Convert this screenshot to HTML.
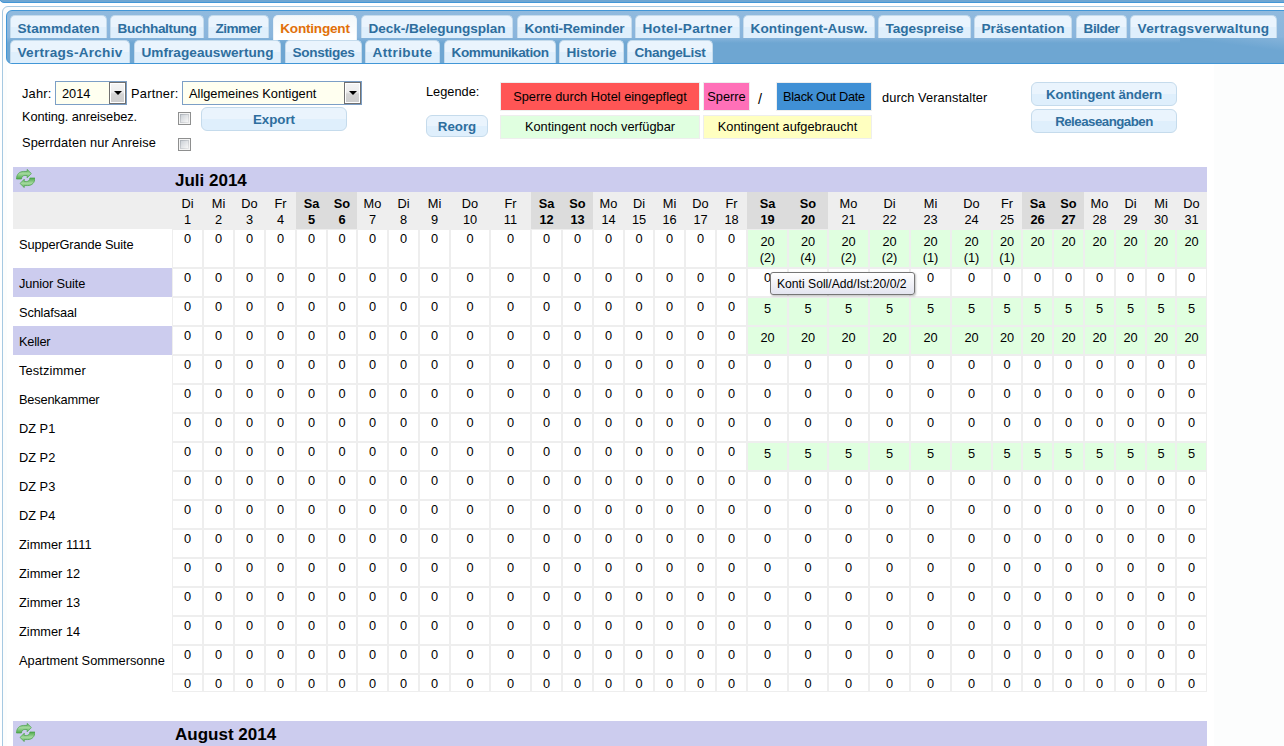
<!DOCTYPE html>
<html lang="de"><head><meta charset="utf-8"><title>Kontingent</title>
<style>
html,body{margin:0;padding:0;background:#fff;overflow:hidden}
body{width:1284px;height:746px;position:relative;font-family:"Liberation Sans",sans-serif;font-size:12.8px;color:#000}
.topstrip{position:absolute;left:-1px;top:-3px;width:1400px;height:5.5px;background:#6ea6d2;border:1px solid #4297d7;border-radius:0 0 0 5px;box-sizing:border-box}
.panel{position:absolute;left:2px;top:6px;width:1400px;height:900px;border:1px solid #a6c9e2;border-radius:6px;background:#fcfdfd;box-sizing:border-box}
.abs>*{position:absolute}
.white{left:7px;top:64px;width:1207px;height:700px;background:#fff}
.tabhead{left:6px;top:10px;width:1400px;height:54px;border:1px solid #4297d7;border-radius:6px 0 0 6px;box-sizing:border-box;background:linear-gradient(#90bade 0,#8ab5dc 26px,#6ea6d2 32px,#6ea6d2 100%)}
.tab{position:absolute;height:22px;line-height:24px;border:1px solid #c5dbec;border-bottom:0;border-radius:5px 5px 0 0;background:linear-gradient(#eaf4fd 0,#eaf4fd 10.5px,#dfeffc 11.5px,#dfeffc 100%);color:#2e6e9e;font-weight:bold;font-size:13.6px;text-align:center;white-space:nowrap;box-sizing:content-box}
.tab.act{background:linear-gradient(#f4f8fa 0,#fafcfd 12px,#fff 20px);color:#e17009;border-color:#eaf2f8;height:24px}
.lbl{white-space:nowrap;line-height:15px}
.sel{height:22px;border:1px solid #7c9fc6;background:#fffff0;box-sizing:content-box}
.sel span{position:absolute;left:6px;top:0;line-height:23px;white-space:nowrap}
.sel i{position:absolute;right:0;top:0;width:17px;height:22px;border:1px solid #707070;box-sizing:border-box;background:linear-gradient(#f4f4f4 0,#ededed 45%,#d4d4d4 55%,#cdcdcd 100%);box-shadow:inset 0 0 0 1px #fff}
.sel i b{position:absolute;left:4px;top:8px;width:0;height:0;border:4px solid transparent;border-top:4px solid #000;border-bottom:0}
.cb{width:11px;height:11px;border:1px solid #8e8f8f;background:linear-gradient(135deg,#cdd2d8,#f7f7f7) 2px 2px/7px 7px no-repeat,linear-gradient(135deg,#aab0b7,#e9e9ea) 1px 1px/9px 9px no-repeat,#f4f4f4}
.btn{height:22px;line-height:23px;border:1px solid #c5dbec;border-radius:6px;background:linear-gradient(#eaf4fd 0,#eaf4fd 50%,#dfeffc 50%,#dfeffc 100%);color:#2e6e9e;font-weight:bold;font-size:13.3px;text-align:center;white-space:nowrap}
.leg{border:1px solid #eee;text-align:center;white-space:nowrap}
.mhead{left:13px;width:1194px;height:25px;background:#ccccee}
.mhead span{position:absolute;left:162px;top:1px;line-height:26px;font-size:17px;font-weight:bold}
.mhead .ico{position:absolute;left:2.5px;top:2px}
.grid{left:13px;border-collapse:separate;border-spacing:0;table-layout:fixed;width:1194px}
.grid th,.grid td{box-sizing:border-box;padding:0;text-align:center;vertical-align:top;font-weight:normal;overflow:hidden}
.grid th{background:#eee;height:37px;line-height:16px;padding-top:4px}
.grid th.we{background:#dcdcdc;font-weight:bold}
.grid td{border:1px solid #eee;height:29px;line-height:16px;padding-top:1px;background:#fff}
.grid td.g{background:#e0ffe0;padding-top:3px}
.grid tr.r1 td.g{padding-top:4px}
.grid td.l{border-color:transparent;text-align:left;padding:7px 0 0 5px;white-space:nowrap;background:transparent}
.grid td.l.lav{background:#ccccee}
.grid tr.r1 td{height:39px}
.grid tr.rl td{height:18px;line-height:15px}
.grid tr.rl td.l{padding-top:0}
.tip{left:770px;top:272px;height:21px;line-height:21px;padding:0 7px 0 6px;border:1px solid #767676;border-radius:3px;background:linear-gradient(#fff,#e4e5f0);color:#000;font-size:12.15px;white-space:nowrap;width:130px;line-height:22px;box-shadow:1px 1px 2px rgba(0,0,0,.25)}

.tab.r1{line-height:26px}
.wedge{position:absolute;left:1173px;top:27px;width:110px;height:14px;background:linear-gradient(to bottom left,#86b3da 0,#7aadd6 25%,#6ea6d2 50%)}

</style></head><body>
<div class="topstrip"></div>
<div class="panel"></div><div class="abs">
<div class="white"></div>
<div class="tabhead"><div class="wedge"></div>
<a class="tab r1" style="letter-spacing:0.041px;left:3px;top:4px;width:95px">Stammdaten</a>
<a class="tab r1" style="letter-spacing:-0.371px;left:103px;top:4px;width:92px">Buchhaltung</a>
<a class="tab r1" style="letter-spacing:-0.518px;left:201px;top:4px;width:59px">Zimmer</a>
<a class="tab r1 act" style="letter-spacing:-0.223px;left:266px;top:4px;width:82px">Kontingent</a>
<a class="tab r1" style="letter-spacing:-0.065px;left:354px;top:4px;width:150px">Deck-/Belegungsplan</a>
<a class="tab r1" style="letter-spacing:-0.14px;left:510px;top:4px;width:113px">Konti-Reminder</a>
<a class="tab r1" style="letter-spacing:0.299px;left:628px;top:4px;width:103px">Hotel-Partner</a>
<a class="tab r1" style="letter-spacing:0.076px;left:736px;top:4px;width:130px">Kontingent-Ausw.</a>
<a class="tab r1" style="letter-spacing:-0.031px;left:871px;top:4px;width:91px">Tagespreise</a>
<a class="tab r1" style="letter-spacing:0.055px;left:967px;top:4px;width:96px">Präsentation</a>
<a class="tab r1" style="letter-spacing:-0.422px;left:1069px;top:4px;width:49px">Bilder</a>
<a class="tab r1" style="letter-spacing:0.324px;left:1123px;top:4px;width:145px">Vertragsverwaltung</a>
<a class="tab" style="letter-spacing:0.25px;left:3px;top:29px;width:118px">Vertrags-Archiv</a>
<a class="tab" style="letter-spacing:0.033px;left:127px;top:29px;width:145px">Umfrageauswertung</a>
<a class="tab" style="letter-spacing:-0.33px;left:278px;top:29px;width:75px">Sonstiges</a>
<a class="tab" style="letter-spacing:0.373px;left:358px;top:29px;width:73px">Attribute</a>
<a class="tab" style="letter-spacing:-0.44px;left:437px;top:29px;width:110px">Kommunikation</a>
<a class="tab" style="letter-spacing:-0.078px;left:552px;top:29px;width:63px">Historie</a>
<a class="tab" style="letter-spacing:-0.302px;left:620px;top:29px;width:84px">ChangeList</a>
</div>
<div class="lbl" style="left:22px;top:86px;letter-spacing:0.2px">Jahr:</div>
<div class="sel" style="left:55px;top:81px;width:70px"><span>2014</span><i><b></b></i></div>
<div class="lbl" style="left:131px;top:86px;letter-spacing:0.25px">Partner:</div>
<div class="sel" style="left:182px;top:81px;width:178px"><span>Allgemeines Kontigent</span><i><b></b></i></div>
<div class="lbl" style="left:22px;top:109px;letter-spacing:-0.084px">Konting. anreisebez.</div>
<div class="cb" style="left:178px;top:112px"></div>
<div class="btn" style="left:201px;top:107px;width:144px">Export</div>
<div class="lbl" style="left:22px;top:135px;letter-spacing:0.109px">Sperrdaten nur Anreise</div>
<div class="cb" style="left:178px;top:138px"></div>
<div class="lbl" style="left:426px;top:84px">Legende:</div>
<div class="btn" style="left:426px;top:115px;width:60px;height:20px;line-height:22px">Reorg</div>
<div class="leg" style="left:500px;top:82px;width:198px;height:27px;line-height:27px;background:#ff5555">Sperre durch Hotel eingepflegt</div>
<div class="leg" style="left:703px;top:82px;width:45px;height:27px;line-height:27px;background:#ff70b8">Sperre</div>
<div class="lbl" style="left:758px;top:91.5px;font-size:14.5px">/</div>
<div class="leg" style="left:776px;top:82px;width:94px;height:27px;line-height:27px;background:#4090d5;letter-spacing:-0.3px">Black Out Date</div>
<div class="lbl" style="left:882px;top:90px;letter-spacing:0.086px">durch Veranstalter</div>
<div class="leg" style="left:500px;top:115px;width:198px;height:22px;line-height:22px;background:#e0ffe0">Kontingent noch verfügbar</div>
<div class="leg" style="left:703px;top:115px;width:167px;height:22px;line-height:22px;background:#ffffc0">Kontingent aufgebraucht</div>
<div class="btn" style="left:1031px;top:82px;width:144px;letter-spacing:-0.129px">Kontingent ändern</div>
<div class="btn" style="left:1031px;top:109px;width:144px;letter-spacing:-0.518px">Releaseangaben</div>

<div class="mhead" style="top:167px"><svg class="ico" width="19.6" height="19" viewBox="0 0 20.4 18.8" preserveAspectRatio="none"><defs><linearGradient id="ga1" x1="0" y1="0" x2="0" y2="1"><stop offset="0" stop-color="#5fb35a"/><stop offset="0.45" stop-color="#a3d99e"/><stop offset="1" stop-color="#4fa84c"/></linearGradient></defs><g fill="url(#ga1)" stroke="#46a044" stroke-width="0.7" stroke-linejoin="round"><path d="M0.5 9.9 C0.6 5.4 3.2 2.5 8 2.4 L11.6 2.4 L11.6 0.4 L16 4.5 L11.6 8.7 L11.6 6.4 L9.2 6.4 C7.2 6.5 5.9 7.6 5.7 9.9 Z"/><path d="M0.5 9.9 C0.6 5.4 3.2 2.5 8 2.4 L11.6 2.4 L11.6 0.4 L16 4.5 L11.6 8.7 L11.6 6.4 L9.2 6.4 C7.2 6.5 5.9 7.6 5.7 9.9 Z" transform="rotate(180 10.1 9.4)"/></g></svg><span>Juli 2014</span></div>
<table class="grid" cellspacing="0" cellpadding="0" style="top:192px"><colgroup><col style="width:159px"><col style="width:31px"><col style="width:31px"><col style="width:31px"><col style="width:31px"><col style="width:31px"><col style="width:30px"><col style="width:31px"><col style="width:31px"><col style="width:31px"><col style="width:40px"><col style="width:41px"><col style="width:31px"><col style="width:31px"><col style="width:31px"><col style="width:30px"><col style="width:31px"><col style="width:31px"><col style="width:31px"><col style="width:41px"><col style="width:40px"><col style="width:41px"><col style="width:41px"><col style="width:41px"><col style="width:41px"><col style="width:30px"><col style="width:31px"><col style="width:31px"><col style="width:31px"><col style="width:31px"><col style="width:30px"><col style="width:31px"></colgroup>
<tr class="hd"><th class="l"></th>
<th>Di<br>1</th>
<th>Mi<br>2</th>
<th>Do<br>3</th>
<th>Fr<br>4</th>
<th class="we">Sa<br>5</th>
<th class="we">So<br>6</th>
<th>Mo<br>7</th>
<th>Di<br>8</th>
<th>Mi<br>9</th>
<th>Do<br>10</th>
<th>Fr<br>11</th>
<th class="we">Sa<br>12</th>
<th class="we">So<br>13</th>
<th>Mo<br>14</th>
<th>Di<br>15</th>
<th>Mi<br>16</th>
<th>Do<br>17</th>
<th>Fr<br>18</th>
<th class="we">Sa<br>19</th>
<th class="we">So<br>20</th>
<th>Mo<br>21</th>
<th>Di<br>22</th>
<th>Mi<br>23</th>
<th>Do<br>24</th>
<th>Fr<br>25</th>
<th class="we">Sa<br>26</th>
<th class="we">So<br>27</th>
<th>Mo<br>28</th>
<th>Di<br>29</th>
<th>Mi<br>30</th>
<th>Do<br>31</th>
</tr>
<tr class="r1"><td class="l" style="letter-spacing:-0.121px;">SupperGrande Suite</td>
<td>0</td>
<td>0</td>
<td>0</td>
<td>0</td>
<td>0</td>
<td>0</td>
<td>0</td>
<td>0</td>
<td>0</td>
<td>0</td>
<td>0</td>
<td>0</td>
<td>0</td>
<td>0</td>
<td>0</td>
<td>0</td>
<td>0</td>
<td>0</td>
<td class="g">20<br>(2)</td>
<td class="g">20<br>(4)</td>
<td class="g">20<br>(2)</td>
<td class="g">20<br>(2)</td>
<td class="g">20<br>(1)</td>
<td class="g">20<br>(1)</td>
<td class="g">20<br>(1)</td>
<td class="g">20</td>
<td class="g">20</td>
<td class="g">20</td>
<td class="g">20</td>
<td class="g">20</td>
<td class="g">20</td>
</tr>
<tr><td class="l lav" style="letter-spacing:-0.115px;">Junior Suite</td>
<td>0</td>
<td>0</td>
<td>0</td>
<td>0</td>
<td>0</td>
<td>0</td>
<td>0</td>
<td>0</td>
<td>0</td>
<td>0</td>
<td>0</td>
<td>0</td>
<td>0</td>
<td>0</td>
<td>0</td>
<td>0</td>
<td>0</td>
<td>0</td>
<td>0</td>
<td>0</td>
<td>0</td>
<td>0</td>
<td>0</td>
<td>0</td>
<td>0</td>
<td>0</td>
<td>0</td>
<td>0</td>
<td>0</td>
<td>0</td>
<td>0</td>
</tr>
<tr><td class="l" style="letter-spacing:-0.145px;">Schlafsaal</td>
<td>0</td>
<td>0</td>
<td>0</td>
<td>0</td>
<td>0</td>
<td>0</td>
<td>0</td>
<td>0</td>
<td>0</td>
<td>0</td>
<td>0</td>
<td>0</td>
<td>0</td>
<td>0</td>
<td>0</td>
<td>0</td>
<td>0</td>
<td>0</td>
<td class="g">5</td>
<td class="g">5</td>
<td class="g">5</td>
<td class="g">5</td>
<td class="g">5</td>
<td class="g">5</td>
<td class="g">5</td>
<td class="g">5</td>
<td class="g">5</td>
<td class="g">5</td>
<td class="g">5</td>
<td class="g">5</td>
<td class="g">5</td>
</tr>
<tr><td class="l lav" style="letter-spacing:-0.22px;">Keller</td>
<td>0</td>
<td>0</td>
<td>0</td>
<td>0</td>
<td>0</td>
<td>0</td>
<td>0</td>
<td>0</td>
<td>0</td>
<td>0</td>
<td>0</td>
<td>0</td>
<td>0</td>
<td>0</td>
<td>0</td>
<td>0</td>
<td>0</td>
<td>0</td>
<td class="g">20</td>
<td class="g">20</td>
<td class="g">20</td>
<td class="g">20</td>
<td class="g">20</td>
<td class="g">20</td>
<td class="g">20</td>
<td class="g">20</td>
<td class="g">20</td>
<td class="g">20</td>
<td class="g">20</td>
<td class="g">20</td>
<td class="g">20</td>
</tr>
<tr><td class="l" style="letter-spacing:0.138px;">Testzimmer</td>
<td>0</td>
<td>0</td>
<td>0</td>
<td>0</td>
<td>0</td>
<td>0</td>
<td>0</td>
<td>0</td>
<td>0</td>
<td>0</td>
<td>0</td>
<td>0</td>
<td>0</td>
<td>0</td>
<td>0</td>
<td>0</td>
<td>0</td>
<td>0</td>
<td>0</td>
<td>0</td>
<td>0</td>
<td>0</td>
<td>0</td>
<td>0</td>
<td>0</td>
<td>0</td>
<td>0</td>
<td>0</td>
<td>0</td>
<td>0</td>
<td>0</td>
</tr>
<tr><td class="l" style="letter-spacing:-0.191px;">Besenkammer</td>
<td>0</td>
<td>0</td>
<td>0</td>
<td>0</td>
<td>0</td>
<td>0</td>
<td>0</td>
<td>0</td>
<td>0</td>
<td>0</td>
<td>0</td>
<td>0</td>
<td>0</td>
<td>0</td>
<td>0</td>
<td>0</td>
<td>0</td>
<td>0</td>
<td>0</td>
<td>0</td>
<td>0</td>
<td>0</td>
<td>0</td>
<td>0</td>
<td>0</td>
<td>0</td>
<td>0</td>
<td>0</td>
<td>0</td>
<td>0</td>
<td>0</td>
</tr>
<tr><td class="l">DZ P1</td>
<td>0</td>
<td>0</td>
<td>0</td>
<td>0</td>
<td>0</td>
<td>0</td>
<td>0</td>
<td>0</td>
<td>0</td>
<td>0</td>
<td>0</td>
<td>0</td>
<td>0</td>
<td>0</td>
<td>0</td>
<td>0</td>
<td>0</td>
<td>0</td>
<td>0</td>
<td>0</td>
<td>0</td>
<td>0</td>
<td>0</td>
<td>0</td>
<td>0</td>
<td>0</td>
<td>0</td>
<td>0</td>
<td>0</td>
<td>0</td>
<td>0</td>
</tr>
<tr><td class="l">DZ P2</td>
<td>0</td>
<td>0</td>
<td>0</td>
<td>0</td>
<td>0</td>
<td>0</td>
<td>0</td>
<td>0</td>
<td>0</td>
<td>0</td>
<td>0</td>
<td>0</td>
<td>0</td>
<td>0</td>
<td>0</td>
<td>0</td>
<td>0</td>
<td>0</td>
<td class="g">5</td>
<td class="g">5</td>
<td class="g">5</td>
<td class="g">5</td>
<td class="g">5</td>
<td class="g">5</td>
<td class="g">5</td>
<td class="g">5</td>
<td class="g">5</td>
<td class="g">5</td>
<td class="g">5</td>
<td class="g">5</td>
<td class="g">5</td>
</tr>
<tr><td class="l">DZ P3</td>
<td>0</td>
<td>0</td>
<td>0</td>
<td>0</td>
<td>0</td>
<td>0</td>
<td>0</td>
<td>0</td>
<td>0</td>
<td>0</td>
<td>0</td>
<td>0</td>
<td>0</td>
<td>0</td>
<td>0</td>
<td>0</td>
<td>0</td>
<td>0</td>
<td>0</td>
<td>0</td>
<td>0</td>
<td>0</td>
<td>0</td>
<td>0</td>
<td>0</td>
<td>0</td>
<td>0</td>
<td>0</td>
<td>0</td>
<td>0</td>
<td>0</td>
</tr>
<tr><td class="l">DZ P4</td>
<td>0</td>
<td>0</td>
<td>0</td>
<td>0</td>
<td>0</td>
<td>0</td>
<td>0</td>
<td>0</td>
<td>0</td>
<td>0</td>
<td>0</td>
<td>0</td>
<td>0</td>
<td>0</td>
<td>0</td>
<td>0</td>
<td>0</td>
<td>0</td>
<td>0</td>
<td>0</td>
<td>0</td>
<td>0</td>
<td>0</td>
<td>0</td>
<td>0</td>
<td>0</td>
<td>0</td>
<td>0</td>
<td>0</td>
<td>0</td>
<td>0</td>
</tr>
<tr><td class="l">Zimmer 1111</td>
<td>0</td>
<td>0</td>
<td>0</td>
<td>0</td>
<td>0</td>
<td>0</td>
<td>0</td>
<td>0</td>
<td>0</td>
<td>0</td>
<td>0</td>
<td>0</td>
<td>0</td>
<td>0</td>
<td>0</td>
<td>0</td>
<td>0</td>
<td>0</td>
<td>0</td>
<td>0</td>
<td>0</td>
<td>0</td>
<td>0</td>
<td>0</td>
<td>0</td>
<td>0</td>
<td>0</td>
<td>0</td>
<td>0</td>
<td>0</td>
<td>0</td>
</tr>
<tr><td class="l">Zimmer 12</td>
<td>0</td>
<td>0</td>
<td>0</td>
<td>0</td>
<td>0</td>
<td>0</td>
<td>0</td>
<td>0</td>
<td>0</td>
<td>0</td>
<td>0</td>
<td>0</td>
<td>0</td>
<td>0</td>
<td>0</td>
<td>0</td>
<td>0</td>
<td>0</td>
<td>0</td>
<td>0</td>
<td>0</td>
<td>0</td>
<td>0</td>
<td>0</td>
<td>0</td>
<td>0</td>
<td>0</td>
<td>0</td>
<td>0</td>
<td>0</td>
<td>0</td>
</tr>
<tr><td class="l">Zimmer 13</td>
<td>0</td>
<td>0</td>
<td>0</td>
<td>0</td>
<td>0</td>
<td>0</td>
<td>0</td>
<td>0</td>
<td>0</td>
<td>0</td>
<td>0</td>
<td>0</td>
<td>0</td>
<td>0</td>
<td>0</td>
<td>0</td>
<td>0</td>
<td>0</td>
<td>0</td>
<td>0</td>
<td>0</td>
<td>0</td>
<td>0</td>
<td>0</td>
<td>0</td>
<td>0</td>
<td>0</td>
<td>0</td>
<td>0</td>
<td>0</td>
<td>0</td>
</tr>
<tr><td class="l">Zimmer 14</td>
<td>0</td>
<td>0</td>
<td>0</td>
<td>0</td>
<td>0</td>
<td>0</td>
<td>0</td>
<td>0</td>
<td>0</td>
<td>0</td>
<td>0</td>
<td>0</td>
<td>0</td>
<td>0</td>
<td>0</td>
<td>0</td>
<td>0</td>
<td>0</td>
<td>0</td>
<td>0</td>
<td>0</td>
<td>0</td>
<td>0</td>
<td>0</td>
<td>0</td>
<td>0</td>
<td>0</td>
<td>0</td>
<td>0</td>
<td>0</td>
<td>0</td>
</tr>
<tr><td class="l">Apartment Sommersonne</td>
<td>0</td>
<td>0</td>
<td>0</td>
<td>0</td>
<td>0</td>
<td>0</td>
<td>0</td>
<td>0</td>
<td>0</td>
<td>0</td>
<td>0</td>
<td>0</td>
<td>0</td>
<td>0</td>
<td>0</td>
<td>0</td>
<td>0</td>
<td>0</td>
<td>0</td>
<td>0</td>
<td>0</td>
<td>0</td>
<td>0</td>
<td>0</td>
<td>0</td>
<td>0</td>
<td>0</td>
<td>0</td>
<td>0</td>
<td>0</td>
<td>0</td>
</tr>
<tr class="rl"><td class="l"></td>
<td>0</td>
<td>0</td>
<td>0</td>
<td>0</td>
<td>0</td>
<td>0</td>
<td>0</td>
<td>0</td>
<td>0</td>
<td>0</td>
<td>0</td>
<td>0</td>
<td>0</td>
<td>0</td>
<td>0</td>
<td>0</td>
<td>0</td>
<td>0</td>
<td>0</td>
<td>0</td>
<td>0</td>
<td>0</td>
<td>0</td>
<td>0</td>
<td>0</td>
<td>0</td>
<td>0</td>
<td>0</td>
<td>0</td>
<td>0</td>
<td>0</td>
</tr>
</table>
<div class="mhead" style="top:721px"><svg class="ico" width="19.6" height="19" viewBox="0 0 20.4 18.8" preserveAspectRatio="none"><defs><linearGradient id="ga2" x1="0" y1="0" x2="0" y2="1"><stop offset="0" stop-color="#5fb35a"/><stop offset="0.45" stop-color="#a3d99e"/><stop offset="1" stop-color="#4fa84c"/></linearGradient></defs><g fill="url(#ga2)" stroke="#46a044" stroke-width="0.7" stroke-linejoin="round"><path d="M0.5 9.9 C0.6 5.4 3.2 2.5 8 2.4 L11.6 2.4 L11.6 0.4 L16 4.5 L11.6 8.7 L11.6 6.4 L9.2 6.4 C7.2 6.5 5.9 7.6 5.7 9.9 Z"/><path d="M0.5 9.9 C0.6 5.4 3.2 2.5 8 2.4 L11.6 2.4 L11.6 0.4 L16 4.5 L11.6 8.7 L11.6 6.4 L9.2 6.4 C7.2 6.5 5.9 7.6 5.7 9.9 Z" transform="rotate(180 10.1 9.4)"/></g></svg><span>August 2014</span></div>
<div class="tip">Konti Soll/Add/Ist:20/0/2</div>
</div>
</body></html>
